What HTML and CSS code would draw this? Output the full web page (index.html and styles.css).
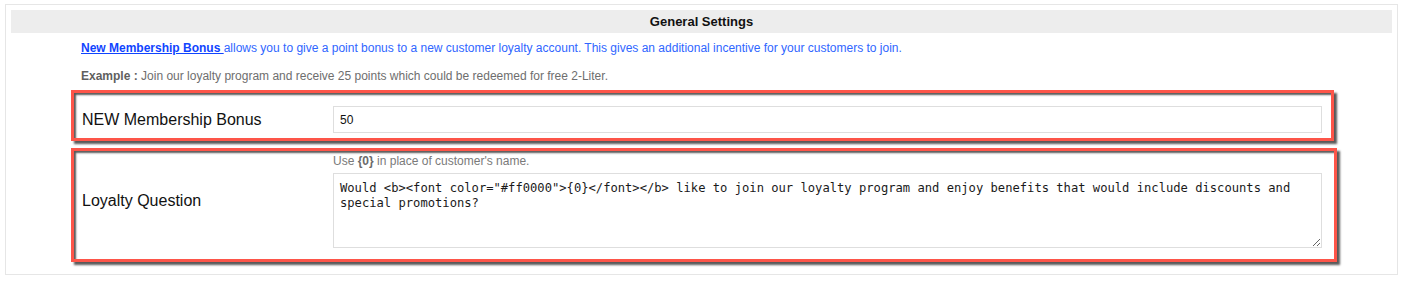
FILE: index.html
```html
<!DOCTYPE html>
<html>
<head>
<meta charset="utf-8">
<link rel="stylesheet" href="styles.css">
</head>
<body>
<div class="panel">
  <div class="panel-header">General Settings</div>
  <p class="desc"><a class="desc-link" href="#">New Membership Bonus </a>allows you to give a point bonus to a new customer loyalty account. This gives an additional incentive for your customers to join.</p>
  <p class="example"><b>Example :</b> Join our loyalty program and receive 25 points which could be redeemed for free 2-Liter.</p>
  <div class="row row-bonus">
    <label class="row-label" for="bonus">NEW Membership Bonus</label>
    <div class="row-field">
      <input id="bonus" class="text-input" type="text" value="50">
    </div>
  </div>
  <div class="row row-question">
    <label class="row-label" for="question">Loyalty Question</label>
    <div class="row-field">
      <div class="hint">Use <b>{0}</b> in place of customer's name.</div>
      <textarea id="question" class="text-area">Would &lt;b&gt;&lt;font color="#ff0000"&gt;{0}&lt;/font&gt;&lt;/b&gt; like to join our loyalty program and enjoy benefits that would include discounts and special promotions?</textarea>
    </div>
  </div>
</div>
</body>
</html>
```

FILE: styles.css
```css
html, body {
  margin: 0;
  padding: 0;
  background: #ffffff;
}

body {
  font-family: "Liberation Sans", Arial, sans-serif;
  padding-top: 4px;
}

.panel {
  margin: 0 12px 0 5px;
  border: 1px solid #e6e6e6;
  padding: 5px 5px 12px 5px;
}

.panel-header {
  background: #ededed;
  height: 23px;
  line-height: 23px;
  text-align: center;
  font-size: 13px;
  font-weight: bold;
  color: #111111;
}

.desc {
  margin: 8px 0 0 70px;
  font-size: 12px;
  line-height: 14px;
  color: #2f66ff;
}

.desc-link {
  color: #1044ff;
  font-weight: bold;
  text-decoration: underline;
}

.example {
  margin: 14px 0 0 70px;
  font-size: 12px;
  line-height: 14px;
  color: #6e6e6e;
}

.example b {
  color: #5f5f5f;
}

.row {
  margin-left: 60px;
  border: 3px solid #fd5549;
  box-shadow: 3px 3px 2px rgba(0, 0, 0, 0.65), inset 2px 2px 2px rgba(0, 0, 0, 0.65);
  display: grid;
  grid-template-columns: 251px 989px;
  align-items: center;
  padding-left: 8px;
}

.row-bonus {
  margin-top: 7px;
  width: 1249px;
  padding-top: 13px;
  padding-bottom: 5px;
}

.row-question {
  margin-top: 7px;
  width: 1252px;
  padding-top: 3px;
  padding-bottom: 11px;
}

.row-label {
  font-size: 16px;
  color: #111111;
}

.row-field {
  display: flex;
  flex-direction: column;
}

.text-input {
  box-sizing: border-box;
  width: 989px;
  height: 27px;
  margin: 0;
  border: 1px solid #dedede;
  padding: 0 6px;
  font-family: "Liberation Sans", Arial, sans-serif;
  font-size: 12px;
  color: #111111;
  outline: none;
}

.hint {
  font-size: 12px;
  line-height: 14px;
  color: #7a7a7a;
  margin-bottom: 5px;
}

.hint b {
  font-weight: bold;
  color: #6a6a6a;
}

.text-area {
  box-sizing: border-box;
  width: 989px;
  height: 75px;
  margin: 0;
  border: 1px solid #dedede;
  padding: 7px 6px;
  font-family: "DejaVu Sans Mono", "Liberation Mono", monospace;
  font-size: 12.15px;
  line-height: 15px;
  color: #1a1a1a;
  outline: none;
  resize: both;
}
```
